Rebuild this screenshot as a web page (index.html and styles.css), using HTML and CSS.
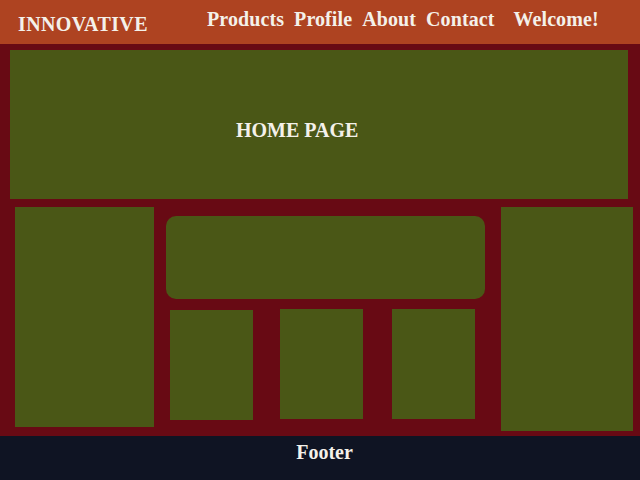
FILE: index.html
```html
<!DOCTYPE html>
<html>
<head>
<meta charset="utf-8">
<link rel="stylesheet" href="styles.css">
</head>
<body>
<header class="topbar">
  <div class="logo">INNOVATIVE</div>
  <nav class="nav">
    <a class="nav-link">Products</a>
    <a class="nav-link">Profile</a>
    <a class="nav-link">About</a>
    <a class="nav-link">Contact</a>
    <span class="welcome">Welcome!</span>
  </nav>
</header>
<main class="main">
  <section class="hero"><h1 class="hero-title">HOME PAGE</h1></section>
  <div class="content">
    <aside class="side side-left"></aside>
    <div class="center">
      <div class="banner"></div>
      <div class="tiles">
        <div class="tile tile-low"></div>
        <div class="tile"></div>
        <div class="tile"></div>
      </div>
    </div>
    <aside class="side side-right"></aside>
  </div>
</main>
<footer class="footer">Footer</footer>
</body>
</html>
```
FILE: styles.css
```css
* { box-sizing: border-box; }
html, body { margin: 0; padding: 0; }
body {
  width: 640px;
  height: 480px;
  overflow: hidden;
  font-family: "Liberation Serif", "Times New Roman", serif;
  font-weight: bold;
  color: #f4f1ea;
  background: #680a14;
  display: flex;
  flex-direction: column;
}
.topbar {
  height: 44px;
  background: #ae4321;
  display: flex;
  align-items: flex-start;
  padding-left: 18px;
  font-size: 20px;
  line-height: 23px;
}
.logo {
  margin-top: 13px;
  letter-spacing: 0.4px;
}
.nav {
  display: flex;
  margin-left: 59px;
  margin-top: 8px;
  gap: 10px;
  letter-spacing: 0.1px;
}
.nav-link { color: #f4f1ea; }
.welcome { margin-left: 9px; }
.main {
  flex: 1;
  background: #680a14;
}
.hero {
  margin: 6px 12px 0 10px;
  height: 149px;
  background: #4a5716;
  padding: 69px 0 0 226px;
}
.hero-title {
  margin: 0;
  font-size: 20px;
  line-height: 23px;
  font-weight: bold;
}
.content {
  display: flex;
  align-items: flex-start;
  padding: 8px 0 0 15px;
}
.side {
  background: #4a5716;
}
.side-left {
  width: 139px;
  height: 220px;
}
.center {
  width: 319px;
  margin-left: 12px;
  padding-top: 9px;
}
.banner {
  height: 83px;
  background: #4a5716;
  border-radius: 10px;
}
.tiles {
  display: flex;
  align-items: flex-start;
  padding-left: 4px;
  margin-top: 10px;
  gap: 27px;
}
.tile {
  width: 83px;
  height: 110px;
  background: #4a5716;
}
.tile + .tile + .tile { margin-left: 2px; }
.tile-low { margin-top: 1px; }
.side-right {
  width: 132px;
  height: 224px;
  margin-left: 16px;
}
.footer {
  height: 44px;
  background: #0f1423;
  font-size: 20px;
  line-height: 23px;
  padding: 5px 0 0 9px;
  text-align: center;
}
```
